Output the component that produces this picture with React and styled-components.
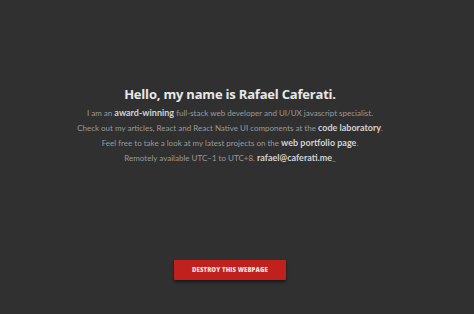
import React from "react";
import styled, { createGlobalStyle } from "styled-components";

const Global = createGlobalStyle`
  html, body {
    margin: 0;
    padding: 0;
    background: #303030;
  }
`;

const Page = styled.div`
  width: 460px;
  height: 314px;
  background: #303030;
  display: flex;
  flex-direction: column;
  align-items: center;
  box-sizing: border-box;
  padding-top: 84px;
`;

const Title = styled.h1`
  margin: 0 0 2px;
  font-family: "Open Sans", "Noto Sans", sans-serif;
  font-weight: 700;
  font-size: 13px;
  letter-spacing: -0.2px;
  color: #e8e8e8;
  line-height: 20px;
`;

const Line = styled.p`
  margin: 0;
  height: 15px;
  font-family: Lato, "Liberation Sans", sans-serif;
  font-size: 8px;
  line-height: 15px;
  color: #9a9a9a;
  text-align: center;
  white-space: nowrap;
`;

const Strong = styled.b`
  font-weight: 700;
  font-size: 9px;
  line-height: 1;
  color: #d2d2d2;
`;

const Button = styled.button`
  margin-top: 94px;
  width: 112px;
  height: 20px;
  padding: 0;
  border: none;
  border-radius: 1px;
  background: #c0211c;
  color: #f1e0e0;
  font-family: "Open Sans", "Noto Sans", sans-serif;
  font-weight: 800;
  font-size: 6px;
  letter-spacing: 0.1px;
  box-shadow: 0 2px 3px rgba(0, 0, 0, 0.5);
  cursor: pointer;
`;

export default function App() {
  return (
    <>
      <Global />
      <Page>
        <Title>Hello, my name is Rafael Caferati.</Title>
        <Line>
          I am an <Strong>award-winning</Strong> full-stack web developer and UI/UX javascript specialist.
        </Line>
        <Line>
          Check out my articles, React and React Native UI components at the <Strong>code laboratory</Strong>.
        </Line>
        <Line>
          Feel free to take a look at my latest projects on the <Strong>web portfolio page</Strong>.
        </Line>
        <Line>
          Remotely available UTC−1 to UTC+8. <Strong>rafael@caferati.me</Strong>_
        </Line>
        <Button>DESTROY THIS WEBPAGE</Button>
      </Page>
    </>
  );
}
